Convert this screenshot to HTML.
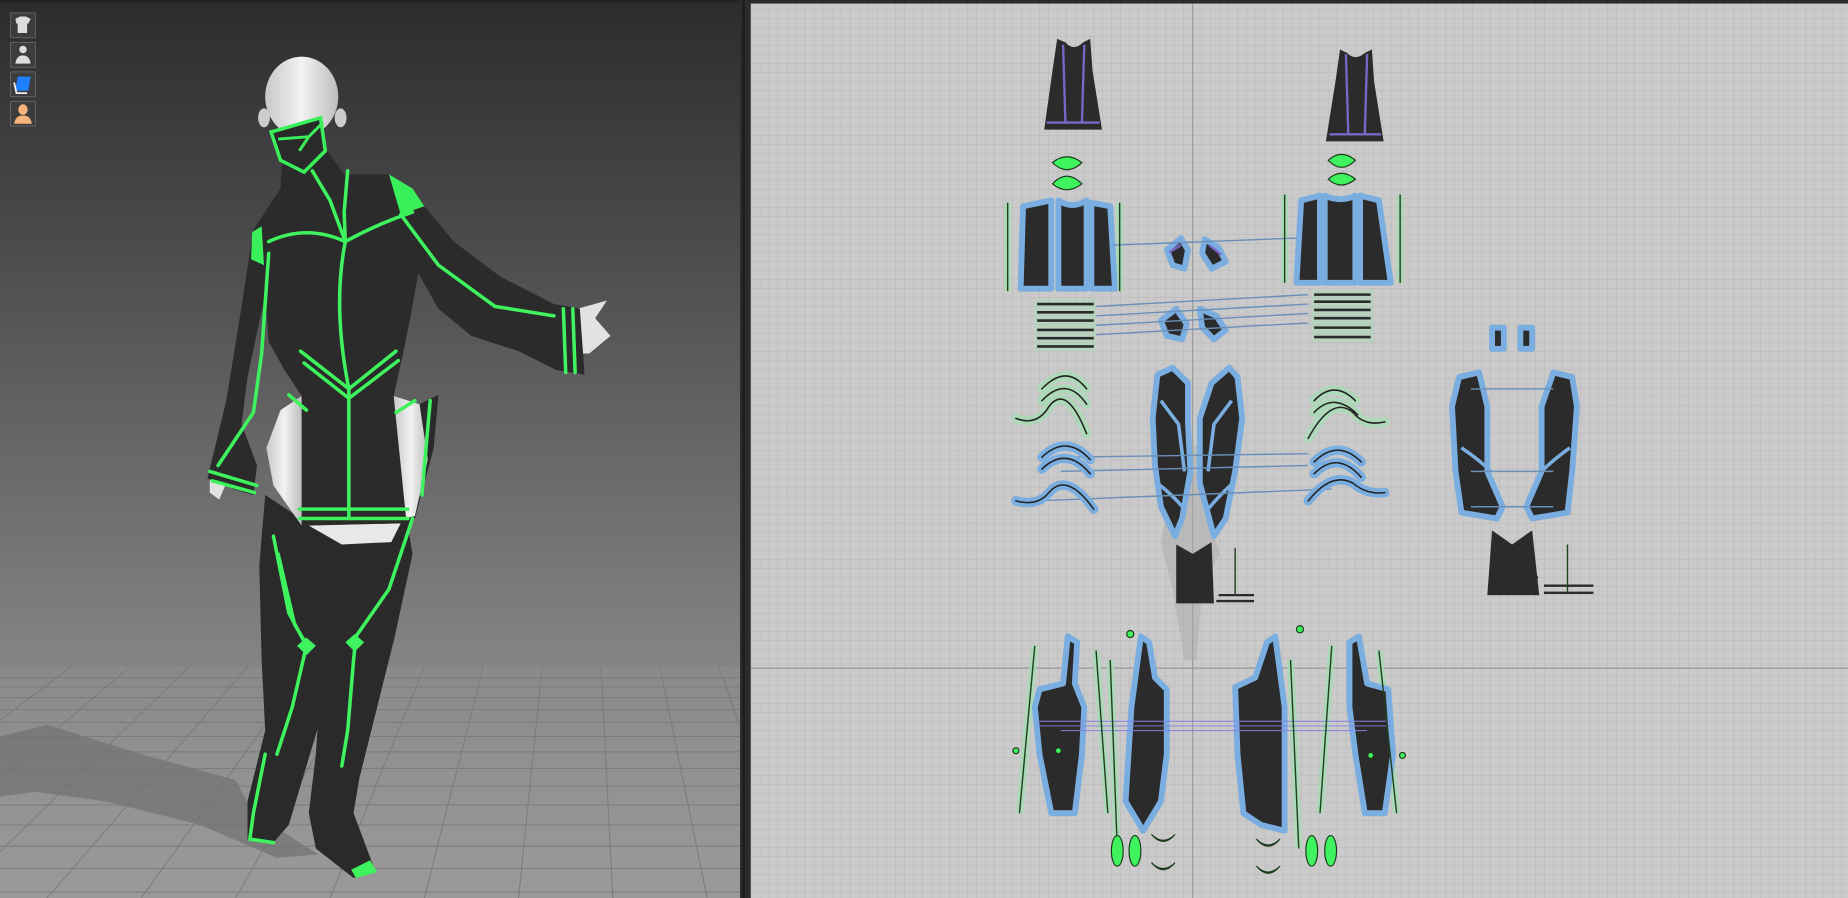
<!DOCTYPE html>
<html><head><meta charset="utf-8"><style>
html,body{margin:0;padding:0;background:#2a2a2a;}
svg{display:block;}
</style></head><body>
<svg width="1848" height="898" viewBox="0 0 1568 762" xmlns="http://www.w3.org/2000/svg" preserveAspectRatio="none">
<defs>
<linearGradient id="sky" x1="0" y1="0" x2="0" y2="1">
<stop offset="0" stop-color="#2c2c2e"/><stop offset="0.35" stop-color="#4a4a4c"/><stop offset="1" stop-color="#858585"/>
</linearGradient>
<linearGradient id="floor" x1="0" y1="0" x2="0" y2="1">
<stop offset="0" stop-color="#8a8a8a"/><stop offset="1" stop-color="#9a9a9a"/>
</linearGradient>
<pattern id="grid" width="7.65" height="7.65" patternUnits="userSpaceOnUse" x="637" y="0">
<rect width="7.65" height="7.65" fill="#cacaca"/>
<path d="M0 0H7.65M0 0V7.65" stroke="#b6b6b6" stroke-width="0.8"/>
</pattern>
<linearGradient id="skin" x1="0" y1="0" x2="1" y2="0"><stop offset="0" stop-color="#c8c8c8"/><stop offset="0.5" stop-color="#f2f2f2"/><stop offset="1" stop-color="#bdbdbd"/></linearGradient>
</defs>

<rect x="0" y="0" width="628" height="570" fill="url(#sky)"/>
<rect x="0" y="566" width="628" height="196" fill="url(#floor)"/>
<g stroke="#7a7a7a" stroke-width="0.8" fill="none">
<path d="M0 575H628M0 583H628M0 592H628M0 602H628M0 613H628M0 625H628M0 638H628M0 652H628M0 667H628M0 683H628M0 700H628M0 718H628M0 737H628M0 757H628"/>
<path d="M-200 762L60 566M-120 762L110 566M-40 762L160 566M40 762L210 566M120 762L260 566M200 762L310 566M280 762L360 566M360 762L410 566M440 762L460 566M520 762L510 566M600 762L560 566M680 762L610 566M760 762L660 566"/>
</g>
<path d="M0 625L40 615L120 640L200 662L215 690L270 725L235 728L170 700L90 680L30 672L0 676Z" fill="#737373" opacity="0.75"/>
<rect x="0" y="0" width="628" height="2" fill="#222"/>

<g>
<rect x="9" y="11" width="21" height="21" fill="#3c3c3c" stroke="#666" stroke-width="0.8"/>
<path d="M13 16l4-2h5l4 2-2 4h-1v8h-8v-8h-1z" fill="#ddd"/>
<rect x="9" y="36" width="21" height="21" fill="#3c3c3c" stroke="#666" stroke-width="0.8"/>
<circle cx="19.5" cy="42" r="3.2" fill="#ddd"/><path d="M13 54q1-7 6.5-7t6.5 7z" fill="#ddd"/>
<rect x="9" y="61" width="21" height="21" fill="#3c3c3c" stroke="#666" stroke-width="0.8"/>
<path d="M15 65h11l-2 12h-11z" fill="#1e7fff"/><path d="M12 70l2 9h9" stroke="#eee" stroke-width="1.5" fill="none"/>
<rect x="9" y="86" width="21" height="21" fill="#3c3c3c" stroke="#666" stroke-width="0.8"/>
<ellipse cx="19.5" cy="93" rx="4" ry="4.5" fill="#f7b47c"/><path d="M12 105q1-7 7.5-7t7.5 7z" fill="#f7b47c"/>
</g>

<!-- figure -->
<g>
<ellipse cx="256" cy="82" rx="31" ry="34" fill="url(#skin)"/>
<ellipse cx="224" cy="100" rx="5" ry="8" fill="#ccc"/><ellipse cx="289" cy="100" rx="5" ry="8" fill="#ccc"/>
<!-- legs -->
<path d="M225 420L255 440L285 455L280 540L275 600L260 650L245 700L232 715L210 712L210 680L225 620L222 560L220 480Z" fill="#2a2a2a"/>
<path d="M285 455L345 440L350 470L335 540L320 600L305 660L300 690L318 738L300 745L268 720L262 690L268 640L272 580L280 530Z" fill="#2a2a2a"/>
<path d="M352 345L372 335L368 380L352 440L335 470Z" fill="#2a2a2a"/>
<!-- white thighs -->
<path d="M256 336L238 348L226 380L232 412L256 446Z" fill="url(#skin)"/>
<path d="M334 336L356 343L363 390L352 438L343 440Z" fill="url(#skin)"/>
<path d="M262 446L340 444L332 460L290 462Z" fill="#e8e8e8"/>
<path d="M490 262L515 255L505 270L518 285L500 300L488 300Z" fill="#e2e2e2"/>
<path d="M178 402L192 410L186 424L178 418Z" fill="#e2e2e2"/>
<!-- torso + arms -->
<path d="M240 128L278 128L292 148L330 148L350 162L360 175L385 205L425 235L470 258L492 262L496 318L472 314L440 298L400 285L372 262L355 232L348 270L342 300L334 336L345 444L256 446L256 336L242 315L228 290L225 250L210 320L205 360L218 395L215 420L198 415L176 406L192 340L205 260L215 195L238 160Z" fill="#2b2b2b"/>
<path d="M230 112L272 100L276 128L258 146L238 136Z" fill="#2a2a2a" stroke="#39f05a" stroke-width="3"/>
<path d="M236 118L262 116L274 104M262 116L254 128" stroke="#39f05a" stroke-width="2.5" fill="none"/>
<path d="M330 148L350 160L360 175L340 182Z" fill="#39f05a"/>
<path d="M214 197L222 192L224 225L213 220Z" fill="#39f05a"/>
<g stroke="#3ef35d" stroke-width="3" fill="none" stroke-linecap="round">
<path d="M265 145L280 170L293 205M295 145L292 180L293 205M228 205Q260 190 293 205Q320 190 350 180"/>
<path d="M293 205Q282 260 296 330L296 440"/>
<path d="M255 298L296 330L336 298M258 308L296 338L338 306"/>
<path d="M245 335L260 348M352 340L336 350"/>
<path d="M254 432L346 432M254 440L346 440"/>
<path d="M340 182L372 225L420 260L470 268"/>
<path d="M478 262L480 316M486 262L488 316"/>
<path d="M228 215L222 300L215 350L185 395M178 400L218 412M180 408L216 418"/>
<path d="M232 455L245 520L260 548L248 600L235 640M236 470L250 530L262 550"/>
<path d="M350 440L330 500L302 540L300 560L295 620L290 650M365 340L358 420"/>
<path d="M225 640L215 690L212 712L232 715"/>
</g>
<path d="M252 548l8-7 8 7-8 8z" fill="#3ef35d"/><path d="M293 545l8-7 8 7-8 8z" fill="#3ef35d"/>
<path d="M298 738l16-8 6 10-18 5z" fill="#3ef35d"/>
</g>

<rect x="628" y="0" width="9" height="762" fill="#2b2b2b"/>
<rect x="630" y="0" width="2" height="762" fill="#1c1c1c"/>

<rect x="637" y="3" width="931" height="759" fill="url(#grid)"/>
<rect x="637" y="0" width="931" height="3" fill="#2b2b2b"/>
<path d="M1012 3V762M637 567H1568" stroke="#8e8e8e" stroke-width="0.8"/>
<path d="M1000 380Q1012 372 1020 385L1025 440L1035 470L1020 500L1015 560L1005 560L995 500L985 460Z" fill="#aaa" opacity="0.5"/>

<!-- green glow strips -->
<g stroke="#a6dcb4" stroke-width="6" opacity="0.85">
<path d="M855 172V247M950 172V247M1090 165V240M1188 165V240"/>
<path d="M878 548L865 690M930 552L940 690M1170 552L1185 690M1130 548L1120 690"/>
<path d="M942 560L948 720M1095 560L1102 720"/>
</g>

<g stroke="#7aaee0" stroke-width="5" stroke-linejoin="round">
<path d="M897 33L904 36Q911 44 919 36L925 33L927 60L935 110L886 110L893 60Z" fill="#2b2b2b" stroke="none"/>
<path d="M1137 42L1143 45Q1150 52 1158 45L1164 42L1166 70L1174 120L1125 120L1133 70Z" fill="#2b2b2b" stroke="none"/>
<path d="M868 175L892 170L892 245L866 245Z" fill="#2b2b2b"/>
<path d="M898 170Q910 178 922 170L922 245L898 245Z" fill="#2b2b2b"/>
<path d="M926 172L942 175L946 245L926 245Z" fill="#2b2b2b"/>
<path d="M1104 170L1120 166L1120 240L1100 240Z" fill="#2b2b2b"/>
<path d="M1124 166Q1138 172 1150 166L1150 240L1124 240Z" fill="#2b2b2b"/>
<path d="M1154 166L1170 170L1180 240L1154 240Z" fill="#2b2b2b"/>
<path d="M990 212L1002 202L1008 212L1005 228L995 225Z" fill="#2b2b2b"/>
<path d="M1022 203L1034 210L1040 222L1028 228L1020 215Z" fill="#2b2b2b"/>
<path d="M985 272L998 262L1007 275L1003 288L990 285Z" fill="#2b2b2b"/>
<path d="M1018 262L1032 268L1040 280L1030 288L1020 278Z" fill="#2b2b2b"/>
<path d="M982 318L995 312L1008 325L1008 358L1010 400L1003 440L997 455L985 430L980 395L978 355Z" fill="#2b2b2b"/>
<path d="M1043 312L1050 320L1054 355L1048 400L1040 440L1030 455L1018 410L1018 355L1028 325Z" fill="#2b2b2b"/>
<path d="M1238 320L1255 316L1262 345L1262 400L1275 430L1270 440L1240 435L1235 400L1232 345Z" fill="#2b2b2b"/>
<path d="M1318 316L1334 320L1338 345L1334 400L1330 435L1300 440L1295 430L1308 400L1308 345Z" fill="#2b2b2b"/>
<path d="M1266 278h10v18h-10zM1290 278h10v18h-10z" fill="#2b2b2b"/>
<path d="M906 540L914 545L912 580L920 600L918 640L912 690L892 690L882 640L878 600L882 585L902 580Z" fill="#2b2b2b"/>
<path d="M968 540L975 545L980 575L990 585L990 640L985 680L970 705L955 680L960 600Z" fill="#2b2b2b"/>
<path d="M1048 583L1065 575L1075 545L1082 540L1090 600L1090 705L1070 700L1055 690L1050 640Z" fill="#2b2b2b"/>
<path d="M1145 545L1153 540L1160 580L1178 585L1182 640L1175 690L1158 690L1150 640L1145 600Z" fill="#2b2b2b"/>
</g>
<g stroke="#7aaee0" stroke-width="3" fill="none">
<path d="M985 340L1000 360L1005 400M1045 340L1030 360L1025 400M982 410Q995 420 1005 432M1046 410Q1035 420 1025 432"/>
<path d="M1240 380Q1255 390 1265 400M1332 380Q1318 390 1308 400"/>
</g>
<path d="M998 462L1012 470L1028 460L1030 512L998 512Z" fill="#2b2b2b"/>
<path d="M1266 450L1283 462L1300 450L1306 505L1262 505Z" fill="#2b2b2b"/>
<g stroke="#2b2b2b" stroke-width="2" fill="none">
<path d="M1034 505h30M1032 510h32M1310 497h42M1310 503h42M1265 490h40M1265 496h40"/>
</g>
<g stroke="#7a66c8" stroke-width="2" fill="none">
<path d="M902 38L904 104M920 38L918 104M888 104H933M1142 46L1144 114M1160 46L1158 114M1128 114H1172"/>
<path d="M992 214L1002 208M1036 216L1026 208"/>
<path d="M880 612h300M880 616h300M900 620h260" stroke="#8a7ee0" stroke-width="0.8"/>
</g>
<g stroke="#6a8fb8" stroke-width="1.2" fill="none">
<path d="M945 208L1100 202M930 260L1110 250M930 268L1110 258M930 276L1110 266M930 284L1110 274"/>
<path d="M900 388L1110 385M900 400L1110 395M880 425L1130 415M1248 330h70M1248 400h70M1248 430h70"/>
</g>
<rect x="878" y="254" width="52" height="44" fill="#a6dcb4" opacity="0.5"/>
<rect x="1113" y="246" width="52" height="44" fill="#a6dcb4" opacity="0.5"/>
<g stroke="#2b2b2b" stroke-width="2.2">
<path d="M880 258h48M880 265h48M880 272h48M880 280h48M880 287h48M880 294h48"/>
<path d="M1115 250h48M1115 256h48M1115 263h48M1115 270h48M1115 278h48M1115 286h48"/>
</g>
<g fill="none" stroke-linecap="round">
<g stroke="#a6dcb4" stroke-width="8" opacity="0.8">
<path d="M884 330Q905 308 922 330M884 340Q905 318 922 343M862 355Q880 362 890 345Q905 325 922 368"/>
<path d="M1115 340Q1132 322 1150 340M1115 350Q1132 332 1152 352M1110 372Q1130 335 1148 350Q1158 362 1175 358"/>
</g>
<g stroke="#7aaee0" stroke-width="8">
<path d="M884 388Q905 368 925 390M884 398Q905 378 925 402M862 425Q880 430 890 418Q905 400 928 432"/>
<path d="M1115 392Q1135 372 1155 392M1115 402Q1135 382 1155 405M1110 425Q1130 400 1148 410Q1160 420 1175 418"/>
</g>
<g stroke="#222" stroke-width="1.3">
<path d="M884 330Q905 308 922 330M884 340Q905 318 922 343M862 355Q880 362 890 345Q905 325 922 368M884 388Q905 368 925 390M884 398Q905 378 925 402M862 425Q880 430 890 418Q905 400 928 432"/>
<path d="M1115 340Q1132 322 1150 340M1115 350Q1132 332 1152 352M1110 372Q1130 335 1148 350Q1158 362 1175 358M1115 392Q1135 372 1155 392M1115 402Q1135 382 1155 405M1110 425Q1130 400 1148 410Q1160 420 1175 418"/>
</g>
</g>
<g stroke="#1f3f1f" stroke-width="1.2">
<path d="M855 172V247M950 172V247M1090 165V240M1188 165V240M878 548L865 690M930 552L940 690M1170 552L1185 690M1130 548L1120 690M942 560L948 720M1095 560L1102 720M1048 465v40M1330 462v40"/>
</g>
<g fill="#3ef35d" stroke="#1c3a1c" stroke-width="1">
<path d="M893 138Q905 128 918 138Q905 150 893 138Z"/>
<path d="M893 156Q905 143 918 156Q905 166 893 156Z"/>
<path d="M1127 136Q1138 126 1150 136Q1138 148 1127 136Z"/>
<path d="M1127 152Q1138 142 1150 152Q1138 162 1127 152Z"/>
<ellipse cx="948" cy="722" rx="5" ry="13"/><ellipse cx="963" cy="722" rx="5" ry="13"/>
<ellipse cx="1113" cy="722" rx="5" ry="13"/><ellipse cx="1129" cy="722" rx="5" ry="13"/>
<path d="M977 708Q987 718 997 708Q987 720 977 708Z"/><path d="M977 732Q987 742 997 732Q987 744 977 732Z"/>
<path d="M1066 712Q1076 722 1086 712Q1076 724 1066 712Z"/><path d="M1066 735Q1076 745 1086 735Q1076 747 1066 735Z"/>
<circle cx="959" cy="538" r="3"/><circle cx="1103" cy="534" r="3"/>
<circle cx="862" cy="637" r="2.5"/><circle cx="898" cy="637" r="2.5"/><circle cx="1163" cy="641" r="2.5"/><circle cx="1190" cy="641" r="2.5"/>
</g>
</svg>
</body></html>
